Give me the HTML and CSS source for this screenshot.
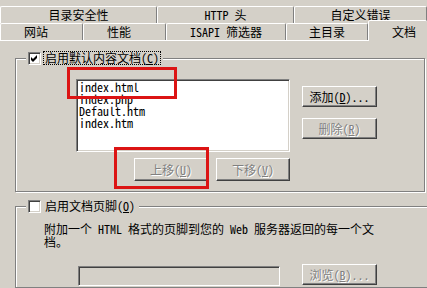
FILE: index.html
```html
<!DOCTYPE html>
<html lang="zh-CN">
<head>
    <meta charset="UTF-8">
    <meta name="viewport" content="width=device-width, initial-scale=1.0">
    <title>文档</title>
    <link rel="stylesheet" href="styles.css">
</head>
<body>
    <div class="tabs">
        <div class="tab-row tab-row-back">
            <div class="tab">目录安全性</div>
            <div class="tab">HTTP 头</div>
            <div class="tab">自定义错误</div>
        </div>
        <div class="tab-row tab-row-front">
            <div class="tab tab-shift">网站</div>
            <div class="tab tab-shift">性能</div>
            <div class="tab">ISAPI 筛选器</div>
            <div class="tab">主目录</div>
            <div class="tab tab-active">文档</div>
        </div>
    </div>

    <div class="panel">
        <div class="group group-docs">
            <div class="group-title">
                <span class="check">
                    <svg width="11" height="11" viewBox="0 0 11 11"><polygon points="2,4 4,6 8,2 8,5 4,9 2,7" fill="#000"/></svg>
                </span>
                <span class="title-label focus">启用默认内容文档(<u>C</u>)</span>
            </div>
            <div class="docs-body">
                <div class="listbox">
                    <div class="list-item">index.html</div>
                    <div class="list-item">index.php</div>
                    <div class="list-item">Default.htm</div>
                    <div class="list-item">index.htm</div>
                </div>
                <div class="side-buttons">
                    <button class="btn">添加(<u>D</u>)...</button>
                    <button class="btn" disabled>删除(<u>R</u>)</button>
                </div>
                <div class="move-buttons">
                    <button class="btn btn-move" disabled>上移(<u>U</u>)</button>
                    <button class="btn btn-move" disabled>下移(<u>V</u>)</button>
                </div>
            </div>
        </div>

        <div class="group group-footer">
            <div class="group-title">
                <span class="check"></span>
                <span class="title-label">启用文档页脚(<u>O</u>)</span>
            </div>
            <div class="footer-body">
                <p class="footer-text">附加一个 HTML 格式的页脚到您的 Web 服务器返回的每一个文<br>档。</p>
                <div class="browse-row">
                    <input type="text" class="path-input" disabled>
                    <button class="btn" disabled>浏览(<u>B</u>)...</button>
                </div>
            </div>
        </div>
    </div>

    <div class="mark mark-list"></div>
    <div class="mark mark-up"></div>
</body>
</html>
```

FILE: styles.css
```css
html, body {
    margin: 0;
    overflow: hidden;
}
body {
    position: relative;
    width: 427px;
    height: 288px;
    background: #d4d0c8;
    color: #000;
    font-family: "Noto Sans Mono CJK SC", "Noto Sans CJK SC", monospace;
    font-size: 12px;
    line-height: 13px;
}

/* tabs */
.tabs {
    padding-top: 6px;
}
.tab-row {
    display: grid;
    height: 17px;
}
.tab-row-back {
    grid-template-columns: 157px 137px 133px;
}
.tab-row-front {
    grid-template-columns: 83px 83px 120px 82px 59px;
}
.tab {
    box-sizing: border-box;
    height: 17px;
    border-top: 1px solid #fff;
    border-left: 1px solid #fff;
    border-right: 1px solid #808080;
    border-radius: 2px 2px 0 0;
    text-align: center;
    line-height: 15px;
    white-space: nowrap;
    background: #d4d0c8;
}
.tab-shift {
    padding-right: 11px;
}
.tab-active {
    position: relative;
    z-index: 1;
    align-self: start;
    height: 21px;
    margin-top: -3px;
    padding: 3px 0 0 23px;
    text-align: left;
    border-right: none;
}

/* panel */
.panel {
    border-top: 1px solid #fff;
    padding-left: 15px;
}
.group {
    border: 1px solid #808080;
    box-shadow: inset 1px 1px 0 #fff, 1px 1px 0 #fff;
}
.group-docs {
    width: 410px;
    box-sizing: border-box;
    margin-top: 17px;
}
.group-footer {
    width: 430px;
    box-sizing: border-box;
    margin-top: 14px;
    height: 82px;
}
.group-title {
    display: flex;
    align-items: center;
    width: max-content;
    height: 14px;
    margin: -8px 0 0 10px;
    padding: 0 2px;
    background: #d4d0c8;
}
.check {
    box-sizing: border-box;
    width: 13px;
    height: 13px;
    border: 1px solid;
    border-color: #808080 #fff #fff #808080;
    box-shadow: inset 1px 1px 0 #404040, inset -1px -1px 0 #d4d0c8;
    background: #fff;
}
.check svg {
    display: block;
}
.title-label {
    margin-left: 2px;
    padding: 0 1px;
    border: 1px dotted transparent;
    line-height: 12px;
}
.title-label.focus {
    border-color: #000;
}

/* default documents */
.docs-body {
    display: grid;
    grid-template-columns: 214px 75px;
    column-gap: 12px;
    row-gap: 6px;
    padding: 14px 0 10px 60px;
}
.listbox {
    box-sizing: border-box;
    height: 73px;
    padding: 1px 2px;
    border: 1px solid;
    border-color: #808080 #fff #fff #808080;
    box-shadow: inset 1px 1px 0 #404040, inset -1px -1px 0 #d4d0c8;
    background: #fff;
}
.list-item {
    height: 12px;
    line-height: 12px;
    white-space: nowrap;
}
.side-buttons {
    display: flex;
    flex-direction: column;
    gap: 11px;
    margin-top: 7px;
}
.move-buttons {
    display: flex;
    justify-content: flex-end;
    gap: 8px;
}

/* buttons */
.btn {
    box-sizing: border-box;
    width: 75px;
    height: 21px;
    padding: 0;
    border: 1px solid;
    border-color: #fff #404040 #404040 #fff;
    box-shadow: inset -1px -1px 0 #808080;
    background: #d4d0c8;
    color: #000;
    font: inherit;
    line-height: 12px;
}
.btn:disabled {
    color: #808080;
    text-shadow: 1px 1px 0 #fff;
}
.btn-move {
    width: 74px;
    height: 23px;
}

/* footer */
.footer-body {
    padding: 9px 0 0 28px;
}
.footer-text {
    margin: 0;
    line-height: 13px;
}
.browse-row {
    display: flex;
    align-items: flex-start;
    gap: 22px;
    margin-top: 16px;
}
.path-input {
    box-sizing: border-box;
    width: 202px;
    height: 20px;
    margin: 2px 0 0 34px;
    border: 1px solid;
    border-color: #808080 #fff #fff #808080;
    box-shadow: inset 1px 1px 0 #404040, inset -1px -1px 0 #d4d0c8;
    background: #d4d0c8;
}

/* red annotation boxes */
.mark {
    position: absolute;
    box-sizing: border-box;
    border: 3px solid #dc1414;
}
.mark-list {
    left: 67px;
    top: 67px;
    width: 110px;
    height: 32px;
}
.mark-up {
    left: 114px;
    top: 147px;
    width: 95px;
    height: 42px;
}
```
